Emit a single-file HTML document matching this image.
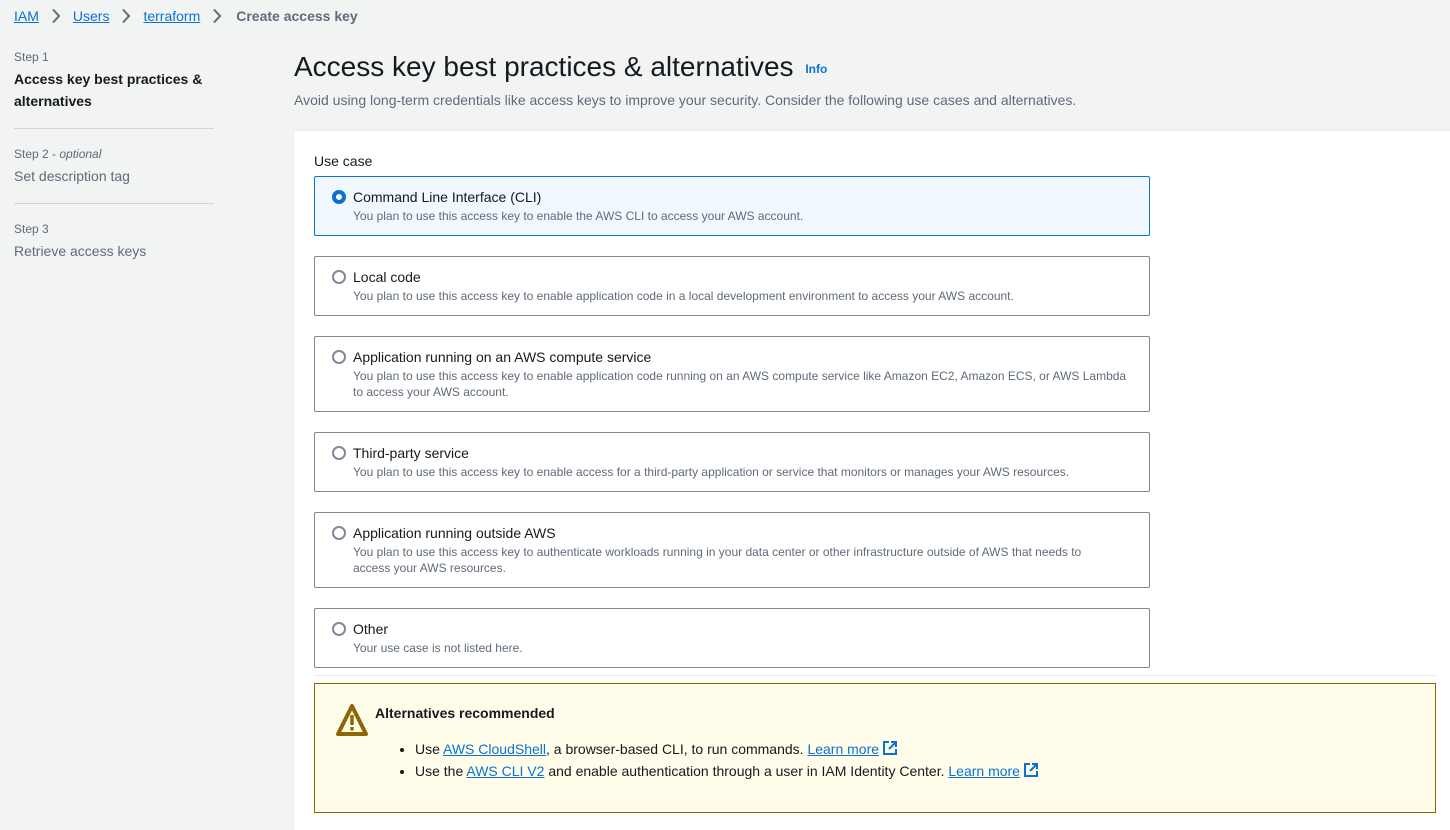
<!DOCTYPE html>
<html><head><style>
*{box-sizing:border-box;margin:0;padding:0}
body{width:1450px;height:819px;overflow:hidden;background:#f2f3f3;font-family:"Liberation Sans",sans-serif;color:#16191f;position:relative}
a{color:#0972d3;text-decoration:underline}
.bc{position:absolute;top:8px;left:14px;font-size:14px;display:flex;align-items:center;gap:0}
.bc svg{margin:0 12px 0 12px}
.bc .cur{color:#5f6b7a;font-weight:bold;margin-left:2px}
.steps{position:absolute;left:14px;top:49px;width:200px}
.step{padding-bottom:16px;margin-bottom:17px;border-bottom:1px solid #d1d5db}
.step:last-child{border:none}
.sl{font-size:12px;color:#5f6b7a;line-height:16px;margin-bottom:3px}
.st{font-size:14px;color:#5f6b7a;line-height:22px}
.st.b{color:#16191f;font-weight:bold}
h1{position:absolute;left:294px;top:51px;font-size:28px;font-weight:normal;color:#16191f}
h1 span{font-size:12px;color:#0972d3;font-weight:bold;margin-left:4px;vertical-align:middle}
.sub{position:absolute;left:294px;top:92px;font-size:14px;color:#5f6b7a}
.panel{position:absolute;left:293px;top:130px;width:1160px;height:700px;background:#fff;border-left:1px solid #e9ebed;border-top:1px solid #e9ebed}
.uc{position:absolute;left:314px;top:153px;font-size:14px}
.card{position:absolute;left:314px;width:836px;border:1px solid #7d8998;border-radius:2px;padding:11px 16px 0 38px;background:#fff}
.card.sel{background:#f1f8ff;border-color:#0972d3}
.card .r{position:absolute;left:17px;top:13px;width:14px;height:14px;border:2px solid #7d8998;border-radius:50%;background:#fff}
.card.sel .r{border:4px solid #0972d3}
.card .t{font-size:14px;line-height:18px}
.card .d{font-size:12px;color:#5f6b7a;line-height:16px;margin-top:2px}
.hr{position:absolute;left:314px;top:675px;width:1122px;border-top:1px solid #e9ebed}
.alert{position:absolute;left:314px;top:683px;width:1122px;height:130px;background:#fffce9;border:1px solid #8d6605}
.alert h3{position:absolute;left:60px;top:21px;font-size:14px;font-weight:bold}
.alert ul{position:absolute;left:100px;top:54px;font-size:14px;line-height:22px;list-style:disc}
</style></head><body>
<div class="bc"><a>IAM</a><svg width="10" height="16" viewBox="0 0 10 16"><path d="M2 1.5l6 6.5-6 6.5" fill="none" stroke="#5f6b7a" stroke-width="2"/></svg><a>Users</a><svg width="10" height="16" viewBox="0 0 10 16"><path d="M2 1.5l6 6.5-6 6.5" fill="none" stroke="#5f6b7a" stroke-width="2"/></svg><a>terraform</a><svg width="10" height="16" viewBox="0 0 10 16"><path d="M2 1.5l6 6.5-6 6.5" fill="none" stroke="#5f6b7a" stroke-width="2"/></svg><span class="cur">Create access key</span></div>
<div class="steps">
<div class="step"><div class="sl">Step 1</div><div class="st b">Access key best practices &amp; alternatives</div></div>
<div class="step"><div class="sl">Step 2 - <i>optional</i></div><div class="st">Set description tag</div></div>
<div class="step"><div class="sl">Step 3</div><div class="st">Retrieve access keys</div></div>
</div>
<h1>Access key best practices &amp; alternatives <span>Info</span></h1>
<div class="sub">Avoid using long-term credentials like access keys to improve your security. Consider the following use cases and alternatives.</div>
<div class="panel"></div>
<div class="uc">Use case</div>
<div class="card sel" style="top:176px;height:60px"><div class="r"></div><div class="t">Command Line Interface (CLI)</div><div class="d">You plan to use this access key to enable the AWS CLI to access your AWS account.</div></div>
<div class="card" style="top:256px;height:60px"><div class="r"></div><div class="t">Local code</div><div class="d">You plan to use this access key to enable application code in a local development environment to access your AWS account.</div></div>
<div class="card" style="top:336px;height:76px"><div class="r"></div><div class="t">Application running on an AWS compute service</div><div class="d">You plan to use this access key to enable application code running on an AWS compute service like Amazon EC2, Amazon ECS, or AWS Lambda<br>to access your AWS account.</div></div>
<div class="card" style="top:432px;height:60px"><div class="r"></div><div class="t">Third-party service</div><div class="d">You plan to use this access key to enable access for a third-party application or service that monitors or manages your AWS resources.</div></div>
<div class="card" style="top:512px;height:76px"><div class="r"></div><div class="t">Application running outside AWS</div><div class="d">You plan to use this access key to authenticate workloads running in your data center or other infrastructure outside of AWS that needs to<br>access your AWS resources.</div></div>
<div class="card" style="top:608px;height:60px"><div class="r"></div><div class="t">Other</div><div class="d">Your use case is not listed here.</div></div>
<div class="hr"></div>
<div class="alert">
<svg style="position:absolute;left:20px;top:19px" width="34" height="34" viewBox="0 0 34 34"><path d="M17 3 L31 31 L3 31 Z" fill="none" stroke="#8d6605" stroke-width="4" stroke-linejoin="round"/><rect x="15.3" y="12" width="3.4" height="10" fill="#8d6605"/><rect x="15.3" y="24" width="3.4" height="3.4" fill="#8d6605"/></svg>
<h3>Alternatives recommended</h3>
<ul>
<li>Use <a>AWS CloudShell</a>, a browser-based CLI, to run commands. <a>Learn more</a> <svg width="14" height="14" viewBox="0 0 14 14" style="vertical-align:-1px"><path d="M6 1H1v12h12V8M8 1h5v5M13 1L6 8" fill="none" stroke="#0972d3" stroke-width="2"/></svg></li>
<li>Use the <a>AWS CLI V2</a> and enable authentication through a user in IAM Identity Center. <a>Learn more</a> <svg width="14" height="14" viewBox="0 0 14 14" style="vertical-align:-1px"><path d="M6 1H1v12h12V8M8 1h5v5M13 1L6 8" fill="none" stroke="#0972d3" stroke-width="2"/></svg></li>
</ul>
</div>
</body></html>
